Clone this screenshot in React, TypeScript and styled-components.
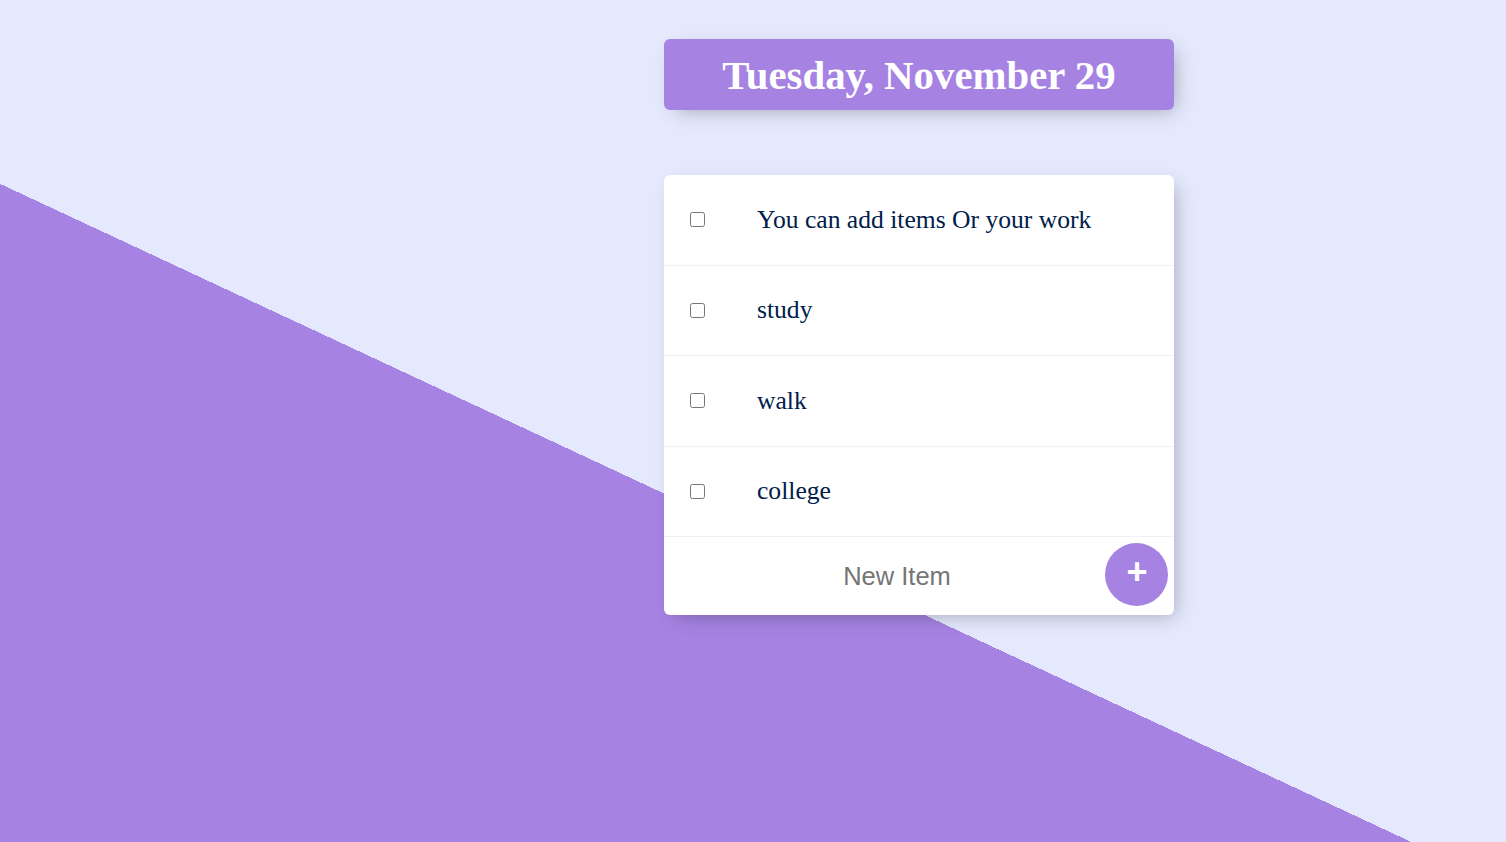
import React from "react";
import styled, { createGlobalStyle } from "styled-components";

const GlobalStyle = createGlobalStyle`
  html, body {
    margin: 0;
    padding: 0;
    overflow: hidden;
  }
  body {
    font-family: "Liberation Serif", "Times New Roman", serif;
  }
`;

const Page = styled.div`
  width: 100vw;
  height: 100vh;
  min-height: 842px;
  box-sizing: border-box;
  padding: 39px 0 0 664px;
  background: linear-gradient(25deg, #a683e3 42.62%, #e4e9fd 42.62%);
  display: flex;
  flex-direction: column;
  gap: 65px;
`;

const Box = styled.div`
  width: 510px;
  background: #ffffff;
  border-radius: 6px;
  box-shadow: 6px 6px 19px -6px rgba(0, 0, 0, 0.3);
`;

const Heading = styled(Box)`
  background: #a683e3;
  height: 71px;
  display: flex;
  align-items: center;
  justify-content: center;
  box-sizing: border-box;
  padding-top: 2px;
`;

const Title = styled.h1`
  margin: 0;
  color: #ffffff;
  font-family: "Liberation Serif", "Times New Roman", serif;
  font-weight: 700;
  font-size: 40.8px;
`;

const Item = styled.div`
  height: 90.5px;
  box-sizing: border-box;
  display: flex;
  align-items: center;
  border-bottom: 1px solid #f1f1f1;
`;

const Check = styled.input`
  width: 15px;
  height: 15px;
  margin: 0 26px 0 26px;
  flex: none;
`;

const Label = styled.p`
  margin: 0;
  padding: 0 26px;
  font-family: "Liberation Serif", "Times New Roman", serif;
  font-size: 25.6px;
  font-weight: 200;
  color: #00204a;
`;

const Form = styled.form`
  height: 78px;
  display: flex;
  align-items: center;
`;

const TextInput = styled.input`
  flex: 1;
  min-width: 0;
  height: 76px;
  margin: 0 25px 0 25px;
  padding: 0 0 0 25px;
  border: none;
  outline: none;
  background: transparent;
  text-align: center;
  font-family: "Liberation Sans", Arial, sans-serif;
  font-size: 25.5px;
  color: #00204a;
  &::placeholder {
    color: #757575;
  }
`;

const AddButton = styled.button`
  width: 63px;
  height: 63px;
  margin: 0 6px 3px 0;
  flex: none;
  border-radius: 50%;
  border: none;
  background: #a683e3;
  color: #ffffff;
  font-family: "Liberation Sans", Arial, sans-serif;
  font-size: 36px;
  font-weight: 700;
  line-height: 1;
  padding: 0 0 6px 1px;
  display: flex;
  align-items: center;
  justify-content: center;
  cursor: pointer;
`;

const items = ["You can add items Or your work", "study", "walk", "college"];

export default function App() {
  return (
    <>
      <GlobalStyle />
      <Page>
        <Heading>
          <Title>Tuesday, November 29</Title>
        </Heading>
        <Box>
          {items.map((t) => (
            <Item key={t}>
              <Check type="checkbox" />
              <Label>{t}</Label>
            </Item>
          ))}
          <Form onSubmit={(e) => e.preventDefault()}>
            <TextInput type="text" placeholder="New Item" autoComplete="off" />
            <AddButton type="submit">+</AddButton>
          </Form>
        </Box>
      </Page>
    </>
  );
}
